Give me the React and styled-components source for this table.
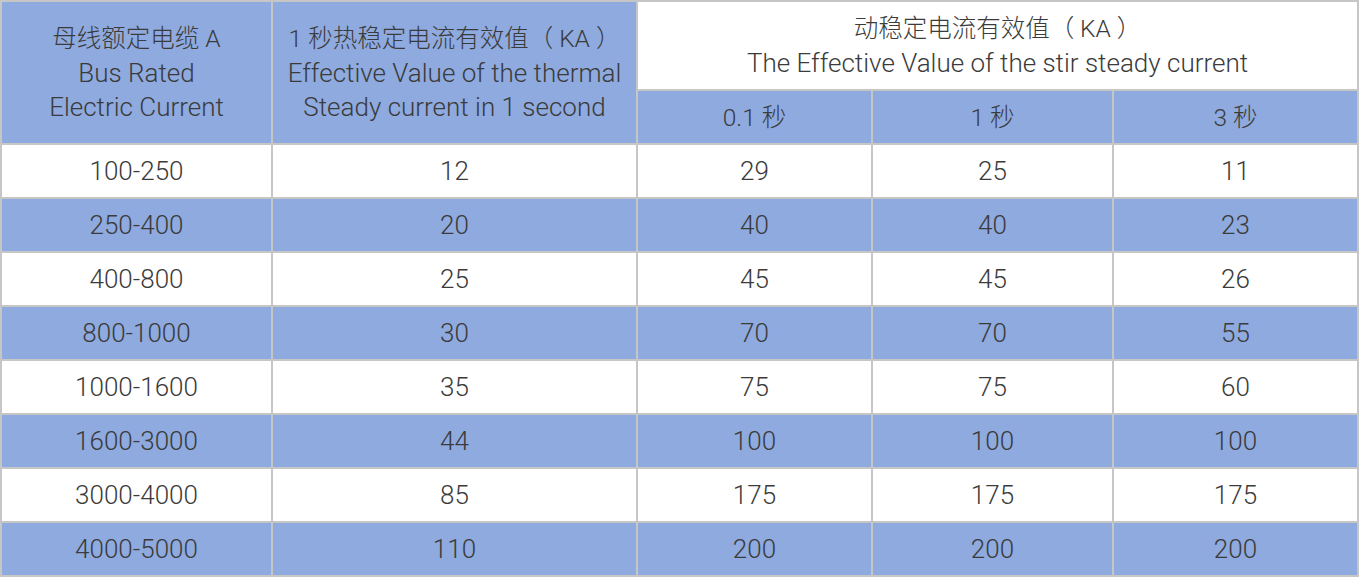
import React from 'react'
import styled, { createGlobalStyle } from 'styled-components'

const GlobalStyle = createGlobalStyle`
  html, body {
    margin: 0;
    padding: 0;
    background: #ffffff;
  }
`

const Table = styled.table`
  width: 1359px;
  border-collapse: collapse;
  table-layout: fixed;
  font-family: Roboto, "Noto Sans CJK SC", sans-serif;
  font-weight: 300;
  font-size: 26px;
  color: #3b3b3b;
  border: 2px solid #c6c6c6;
`

const Cell = styled.td`
  border: 2px solid #c6c6c6;
  background: ${({ $blue }) => ($blue ? '#8eaadf' : '#ffffff')};
  text-align: center;
  vertical-align: middle;
  height: ${({ $h }) => $h || 52}px;
  padding: 0;
  line-height: 34px;
  white-space: nowrap;
`

const Head = styled(Cell).attrs({ as: 'th' })`
  font-weight: 300;
`

const Zh = styled.span`
  font-size: 24.5px;
`

const rows = [
  ['100-250', '12', '29', '25', '11'],
  ['250-400', '20', '40', '40', '23'],
  ['400-800', '25', '45', '45', '26'],
  ['800-1000', '30', '70', '70', '55'],
  ['1000-1600', '35', '75', '75', '60'],
  ['1600-3000', '44', '100', '100', '100'],
  ['3000-4000', '85', '175', '175', '175'],
  ['4000-5000', '110', '200', '200', '200'],
]

const App = () => {
  return (
    <>
      <GlobalStyle />
      <Table>
        <colgroup>
          <col style={{ width: 271 }} />
          <col style={{ width: 365 }} />
          <col style={{ width: 235 }} />
          <col style={{ width: 241 }} />
          <col />
        </colgroup>
        <thead>
          <tr>
            <Head $blue rowSpan={2}>
              <Zh>母线额定电缆 A</Zh><br />Bus Rated<br />Electric Current
            </Head>
            <Head $blue rowSpan={2}>
              <Zh>1 秒热稳定电流有效值（ KA ）</Zh><br />Effective Value of the thermal<br />Steady current in 1 second
            </Head>
            <Head colSpan={3} $h={87}>
              <Zh>动稳定电流有效值（ KA ）</Zh><br />The Effective Value of the stir steady current
            </Head>
          </tr>
          <tr>
            <Head $blue $h={52}><Zh>0.1 秒</Zh></Head>
            <Head $blue $h={52}><Zh>1 秒</Zh></Head>
            <Head $blue $h={52}><Zh>3 秒</Zh></Head>
          </tr>
        </thead>
        <tbody>
          {rows.map((r, i) => (
            <tr key={r[0]}>
              {r.map((v, j) => (
                <Cell key={j} $blue={i % 2 === 1}>{v}</Cell>
              ))}
            </tr>
          ))}
        </tbody>
      </Table>
    </>
  )
}

export default App
